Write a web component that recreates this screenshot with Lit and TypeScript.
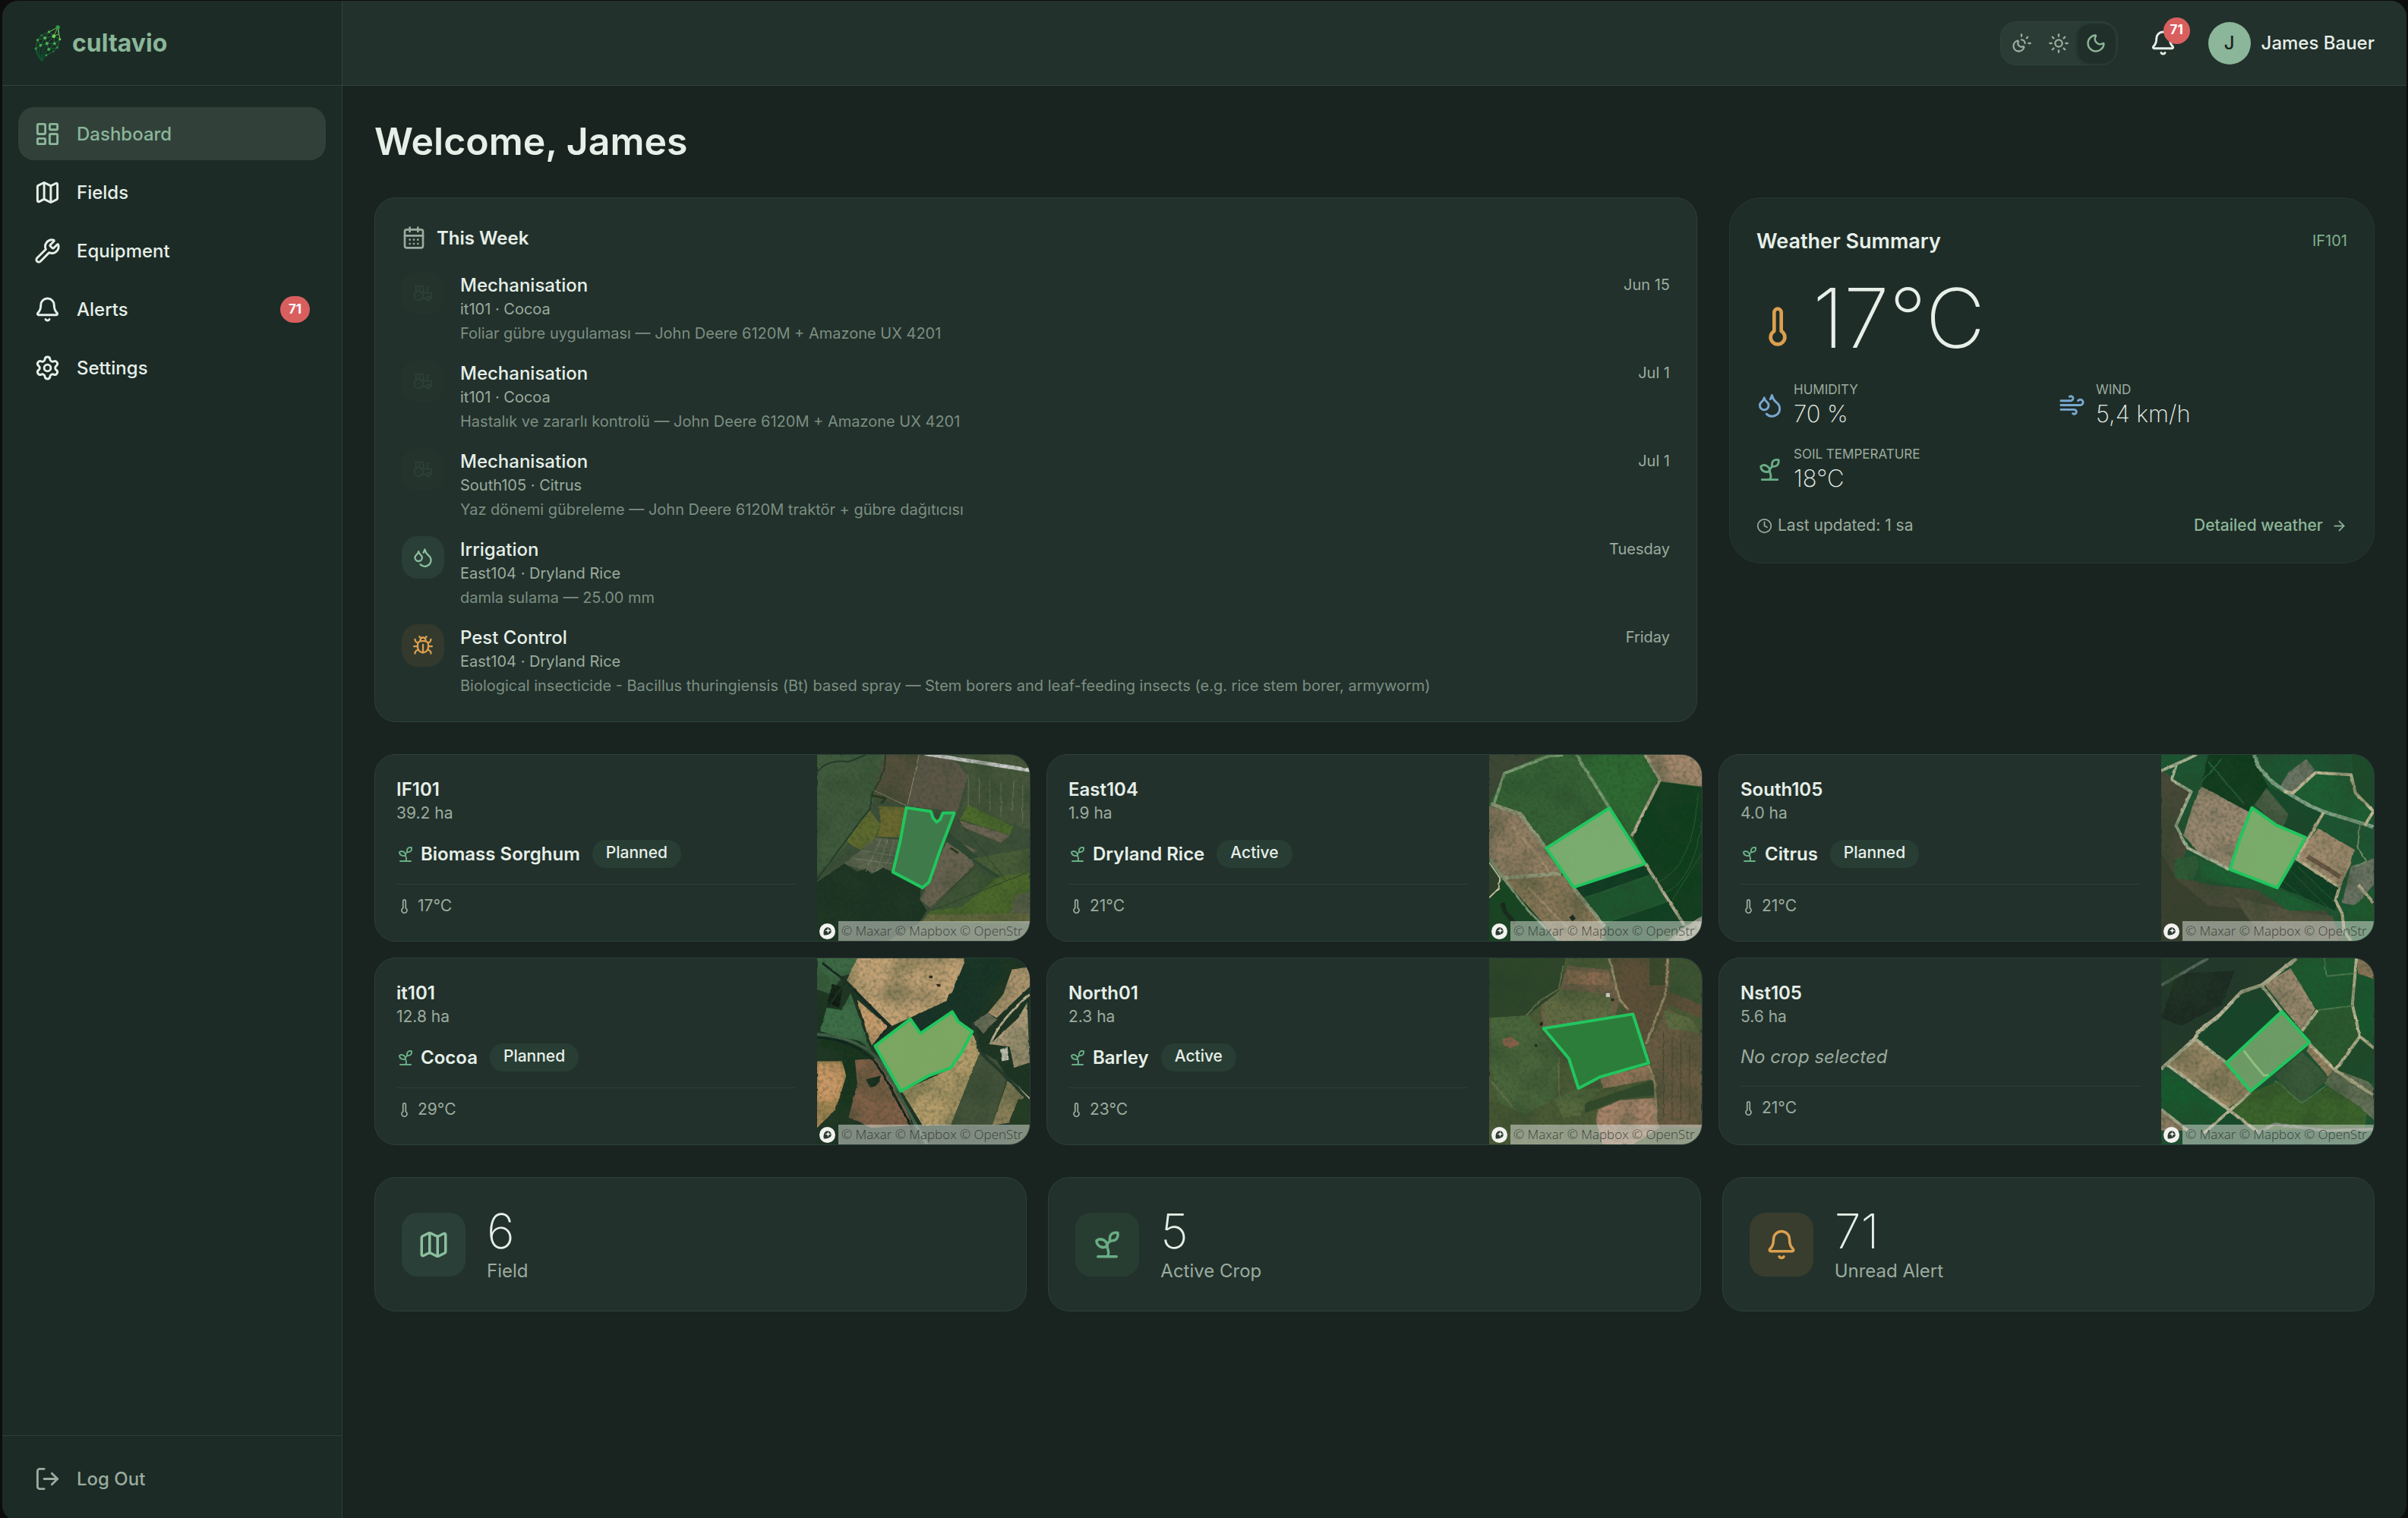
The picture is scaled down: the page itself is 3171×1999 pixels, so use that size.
import { LitElement, html, svg, css, nothing } from "lit";
import type { TemplateResult, SVGTemplateResult } from "lit";
import { customElement, property, state } from "lit/decorators.js";
import { classMap } from "lit/directives/class-map.js";

/* ---------- Icons (24-unit grid, stroked) ---------- */

const ICONS: Record<string, SVGTemplateResult> = {
  dashboard: svg`<rect x="3" y="3" width="7" height="9" rx="1"/><rect x="14" y="3" width="7" height="5" rx="1"/><rect x="14" y="12" width="7" height="9" rx="1"/><rect x="3" y="16" width="7" height="5" rx="1"/>`,
  map: svg`<path d="M14.106 5.553a2 2 0 0 0 1.788 0l3.659-1.83A1 1 0 0 1 21 4.619v12.764a1 1 0 0 1-.553.894l-4.553 2.277a2 2 0 0 1-1.788 0l-4.212-2.106a2 2 0 0 0-1.788 0l-3.659 1.83A1 1 0 0 1 3 19.381V6.618a1 1 0 0 1 .553-.894l4.553-2.277a2 2 0 0 1 1.788 0z"/><path d="M15 5.764v15"/><path d="M9 3.236v15"/>`,
  wrench: svg`<path d="M14.7 6.3a1 1 0 0 0 0 1.4l1.6 1.6a1 1 0 0 0 1.4 0l3.106-3.105c.32-.322.863-.22.983.218a6 6 0 0 1-8.259 7.057l-7.91 7.91a1 1 0 0 1-2.999-3l7.91-7.91a6 6 0 0 1 7.057-8.259c.438.12.54.662.219.984z"/>`,
  bell: svg`<path d="M10.268 21a2 2 0 0 0 3.464 0"/><path d="M3.262 15.326A1 1 0 0 0 4 17h16a1 1 0 0 0 .74-1.673C19.41 13.956 18 12.499 18 8A6 6 0 0 0 6 8c0 4.499-1.411 5.956-2.738 7.326"/>`,
  settings: svg`<path d="M9.671 4.136a2.34 2.34 0 0 1 4.659 0 2.34 2.34 0 0 0 3.319 1.915 2.34 2.34 0 0 1 2.33 4.033 2.34 2.34 0 0 0 0 3.831 2.34 2.34 0 0 1-2.33 4.033 2.34 2.34 0 0 0-3.319 1.915 2.34 2.34 0 0 1-4.659 0 2.34 2.34 0 0 0-3.32-1.915 2.34 2.34 0 0 1-2.33-4.033 2.34 2.34 0 0 0 0-3.831A2.34 2.34 0 0 1 6.35 6.051a2.34 2.34 0 0 0 3.319-1.915"/><circle cx="12" cy="12" r="3"/>`,
  logout: svg`<path d="m16 17 5-5-5-5"/><path d="M21 12H9"/><path d="M9 21H5a2 2 0 0 1-2-2V5a2 2 0 0 1 2-2h4"/>`,
  sunMoon: svg`<path d="M12 2v2"/><path d="M14.837 16.385a6 6 0 1 1-7.223-7.222c.624-.147.97.66.715 1.248a4 4 0 0 0 5.26 5.259c.589-.255 1.396.09 1.248.715"/><path d="M16 12a4 4 0 0 0-4-4"/><path d="m19 5-1.256 1.256"/><path d="M20 12h2"/>`,
  sun: svg`<circle cx="12" cy="12" r="4"/><path d="M12 2v2"/><path d="M12 20v2"/><path d="m4.93 4.93 1.41 1.41"/><path d="m17.66 17.66 1.41 1.41"/><path d="M2 12h2"/><path d="M20 12h2"/><path d="m6.34 17.66-1.41 1.41"/><path d="m19.07 4.93-1.41 1.41"/>`,
  moon: svg`<path d="M20.985 12.486a9 9 0 1 1-9.473-9.472c.405-.022.617.46.402.803a6 6 0 0 0 8.268 8.268c.344-.215.825-.004.803.401"/>`,
  calendar: svg`<path d="M8 2v4"/><path d="M16 2v4"/><rect x="3" y="4" width="18" height="18" rx="2"/><path d="M3 10h18"/><path d="M8 14h.01"/><path d="M12 14h.01"/><path d="M16 14h.01"/><path d="M8 18h.01"/><path d="M12 18h.01"/><path d="M16 18h.01"/>`,
  tractor: svg`<path d="m10 11 11 .9a1 1 0 0 1 .8 1.1l-.665 4.158a1 1 0 0 1-.988.842H20"/><path d="M16 18h-5"/><path d="M18 5a1 1 0 0 0-1 1v5.573"/><path d="M3 4h8.129a1 1 0 0 1 .99.863L13 11.246"/><path d="M4 11V4"/><path d="M7 15h.01"/><path d="M8 10.1V4"/><circle cx="18" cy="18" r="2"/><circle cx="7" cy="15" r="5"/>`,
  droplets: svg`<path d="M7 16.3c2.2 0 4-1.83 4-4.05 0-1.16-.57-2.26-1.71-3.19S7.29 6.75 7 5.3c-.29 1.45-1.14 2.84-2.29 3.76S3 11.1 3 12.25c0 2.22 1.8 4.05 4 4.05z"/><path d="M12.56 6.6A10.97 10.97 0 0 0 14 3.02c.5 2.5 2 4.9 4 6.5s3 3.5 3 5.5a6.98 6.98 0 0 1-11.91 4.97"/>`,
  bug: svg`<path d="m8 2 1.88 1.88"/><path d="M14.12 3.88 16 2"/><path d="M9 7.13v-1a3.003 3.003 0 1 1 6 0v1"/><path d="M12 20c-3.3 0-6-2.7-6-6v-3a4 4 0 0 1 4-4h4a4 4 0 0 1 4 4v3c0 3.3-2.7 6-6 6"/><path d="M12 20v-9"/><path d="M6.53 9C4.6 8.8 3 7.1 3 5"/><path d="M6 13H2"/><path d="M3 21c0-2.1 1.7-3.9 3.8-4"/><path d="M20.97 5c0 2.1-1.6 3.8-3.5 4"/><path d="M22 13h-4"/><path d="M17.2 17c2.1.1 3.8 1.9 3.8 4"/>`,
  thermometer: svg`<path d="M14 4v10.54a4 4 0 1 1-4 0V4a2 2 0 0 1 4 0Z"/>`,
  wind: svg`<path d="M12.8 19.6A2 2 0 1 0 14 16H2"/><path d="M17.5 8a2.5 2.5 0 1 1 2 4H2"/><path d="M9.8 4.4A2 2 0 1 1 11 8H2"/>`,
  sprout: svg`<path d="M14 9.536V7a4 4 0 0 1 4-4h1.5a.5.5 0 0 1 .5.5V5a4 4 0 0 1-4 4 4 4 0 0 0-4 4c0 2 1 3 1 5a5 5 0 0 1-1 3"/><path d="M4 9a5 5 0 0 1 8 4 5 5 0 0 1-8-4"/><path d="M5 21h14"/>`,
  clock: svg`<circle cx="12" cy="12" r="10"/><path d="M12 6v6l4 2"/>`,
  arrow: svg`<path d="M5 12h14"/><path d="m12 5 7 7-7 7"/>`,
};

const icon = (name: string, size: string, width = 2): TemplateResult =>
  html`<svg class="icon ${size}" viewBox="0 0 24 24" stroke-width=${width} aria-hidden="true">${ICONS[name]}</svg>`;

/* ---------- Brand mark: a leaf made of linked nodes ---------- */

const LEAF_NODES: [number, number, number, string][] = [
  [139, 44, 8, "#2f9a45"], [104, 62, 5, "#4db54c"], [123, 79, 7, "#6fd35a"], [147, 91, 5, "#5fc653"],
  [74, 76, 4, "#1e7a3c"], [59, 94, 5, "#3aa548"], [88, 86, 6, "#4fbb50"], [71, 115, 6, "#3fa94a"],
  [96, 108, 6, "#49b64d"], [126, 108, 6, "#3fa94a"], [52, 128, 5, "#2f9444"], [103, 131, 6, "#3fae4b"],
  [137, 124, 5, "#278a41"], [93, 154, 5, "#2a8c42"], [122, 139, 4, "#1d6f3a"],
];

const brandMark = html`<svg class="brand-mark" viewBox="46 32 110 150" aria-hidden="true">
  <g fill="none" stroke="#1d6b3b" stroke-width="3">
    <path d="M139 44 104 62 74 76 59 94 52 128Q54 156 76 178M139 44 147 91 137 124 122 139 93 154"/>
    <path d="M104 62 88 86 59 94M104 62 123 79 88 86 96 108 126 108 147 91 123 79 126 108 137 124 103 131"/>
    <path d="M74 76 88 86 71 115 96 108 123 79M96 108 103 131 126 108M59 94 71 115 52 128"/>
  </g>
  <g fill="none" stroke="#6fbf52" stroke-width="3"><path d="M139 44 123 79M139 44 147 91M139 44 104 62M139 44 143 70 123 79"/></g>
  <g fill="none" stroke="#11502f" stroke-width="4">
    <path d="M76 178Q58 150 71 115M76 178Q66 150 96 108M77 178Q74 150 103 131M78 178Q80 164 93 154M74 174Q54 150 59 130"/>
  </g>
  ${LEAF_NODES.map(([x, y, r, fill]) => svg`<circle cx=${x} cy=${y} r=${r} fill=${fill}/>`)}
</svg>`;

/* ---------- Aerial map drawings ---------- */

const area = (fill: string, points: string) => svg`<polygon fill=${fill} points=${points}/>`;
const track = (stroke: string, width: number, d: string) =>
  svg`<path class="track" stroke=${stroke} stroke-width=${width} d=${d}/>`;
const parcel = (fill: string, points: string) => svg`<polygon class="parcel" fill=${fill} points=${points}/>`;

interface Aerial {
  box: string;
  ground: SVGTemplateResult;
  outline: SVGTemplateResult;
}

const AERIALS: Record<string, Aerial> = {
  if101: {
    box: "1038 44 488 711",
    ground: svg`
      ${area("#3c4f38", "1038,44 1526,44 1526,755 1038,755")}
      ${area("#3f5a3d", "1038,44 1192,44 1180,190 1100,400 1038,500")}
      ${area("#54503b", "1192,44 1272,44 1245,240 1170,210 1168,180")}
      ${area("#5b5746", "1272,44 1350,60 1385,120 1360,262 1245,240")}
      ${area("#46563a", "1350,44 1526,44 1526,330 1370,250 1390,120")}
      ${area("#4d6a2c", "1385,235 1490,320 1480,350 1365,290")}
      ${area("#5e6a2f", "1158,255 1183,310 1172,360 1140,410 1105,375")}
      ${area("#6a682f", "1180,240 1243,245 1226,360 1176,356 1184,300")}
      ${area("#5b6350", "1172,360 1225,368 1212,490 1165,495 1100,460")}
      ${area("#6b6251", "1340,360 1400,405 1395,470 1300,630 1275,600 1290,540")}
      ${area("#6c6452", "1365,295 1480,350 1460,380 1370,318")}
      ${area("#2d4630", "1340,340 1470,520 1460,525 1330,370")}
      ${area("#3f5436", "1400,480 1450,520 1370,640 1300,640")}
      ${area("#495c38", "1395,440 1526,400 1526,490 1470,520")}
      ${area("#4e682c", "1450,515 1526,490 1526,600 1480,690 1280,680 1300,640 1370,625")}
      ${area("#5c5f4a", "1495,580 1526,570 1526,690 1475,680")}
      ${area("#1d3220", "1038,530 1100,460 1130,490 1150,480 1165,500 1190,475 1215,495 1275,550 1275,600 1290,640 1270,690 1200,755 1038,755")}
      ${area("#66673e", "1290,655 1526,650 1526,680 1280,680")}
      ${track("#233a2a", 2, "M1195 44Q1195 110 1165 190L1160 250 1140 290 1038 520M1038 110Q1060 60 1110 70L1150 44")}
      ${track("#8d9280", 1, "M1272 44 1245 240M1168 180 1245 240")}
      ${track("#7d8570", 1, "M1185 365 1150 490M1200 368 1175 490M1215 368 1195 480M1140 410 1215 430M1120 440 1212 460")}
      ${track("#2c4029", 1, "M1360 290 1470 520M1400 470 1290 640M1300 640 1526 490")}
      ${track("#c9cbc8", 5, "M1285 40 1526 103")}
      ${track("#727a63", 1, "M1385 120V240M1410 130V230M1435 140V260M1460 150V280M1490 140 1485 260M1510 160V300")}
      ${track("#26361f", 3, "M1165 200 1195 210 1185 230M1345 400 1360 420")}`,
    outline: parcel("#3f7d4b", "1243,246 1299,260 1304,285 1312,301 1320,292 1327,266 1353,266 1320,410 1295,530 1280,552 1212,492 1228,380"),
  },
  east104: {
    box: "1030 44 488 711",
    ground: svg`
      ${area("#2d5f31", "1030,44 1518,44 1518,755 1030,755")}
      ${area("#3c4634", "1030,44 1165,44 1110,95 1065,120 1030,230")}
      ${area("#366234", "1150,44 1232,44 1306,246 1160,400 1105,275 1040,235 1065,120")}
      ${area("#2f6a30", "1236,44 1388,44 1420,150 1355,355 1306,246")}
      ${area("#a3876c", "1392,44 1518,44 1518,165 1422,145")}
      ${area("#103d1e", "1424,148 1518,168 1518,670 1480,690 1388,460 1360,355")}
      ${area("#927d63", "1030,240 1100,275 1197,495 1065,515 1030,440")}
      ${area("#877556", "1065,520 1200,505 1295,700 1290,755 1180,755 1110,620")}
      ${area("#194524", "1030,560 1065,520 1190,755 1030,755")}
      ${area("#2f3f2c", "1030,450 1058,515 1050,560 1030,590")}
      ${area("#0f3a20", "1226,550 1386,464 1400,500 1240,595")}
      ${area("#1a562e", "1240,595 1400,500 1440,605 1290,690")}
      ${area("#113f21", "1290,690 1440,605 1475,700 1400,755 1300,755")}
      ${track("#7a9a70", 4, "M1040 235 1065 115 1165 50 1200 44M1230 44 1306 246")}
      ${track("#b3a98e", 4, "M1388 44 1422 140 1357 355M1388 460 1478 695")}
      ${track("#96997a", 5, "M1035 232 1100 270 1160 400M1060 515 1195 498M1222 550 1295 700")}
      ${track("#7f9575", 3, "M1030 440 1062 515 1120 640 1190 755")}
      ${track("#cfc39f", 2, "M1030 455 1055 515 1052 555 1030 590")}
      ${track("#255f33", 1, "M1510 190Q1500 460 1420 530M1518 300Q1500 520 1435 570M1518 420 1450 600M1250 590 1395 510M1290 690 1440 605")}
      ${track("#9d8a6a", 3, "M1085 320 1170 490M1120 550 1230 740")}
      ${track("#15281d", 6, "M1060 610 1070 650 1090 690M1218 660 1225 675")}
      ${area("#a8a694", "1518,660 1518,755 1440,755 1480,700")}`,
    outline: parcel("#80b073", "1306,247 1388,460 1224,550 1161,401"),
  },
  south105: {
    box: "1015 44 476 711",
    ground: svg`
      ${area("#1f5430", "1015,44 1491,44 1491,755 1015,755")}
      ${area("#4a4a38", "1015,100 1045,140 1080,185 1045,320 1075,400 1045,500 1120,540 1230,560 1300,640 1380,635 1430,755 1015,755")}
      ${area("#3a3f2f", "1015,420 1050,520 1120,620 1240,640 1200,755 1015,755")}
      ${area("#55523f", "1180,590 1310,640 1400,660 1410,755 1240,755")}
      ${area("#2f5c35", "1045,440 1095,430 1100,470 1085,525 1045,515")}
      ${area("#0d3a1f", "1120,44 1225,44 1235,110 1255,165 1210,260 1105,165")}
      ${area("#99876f", "1105,165 1215,265 1168,478 1100,420 1065,350 1085,240")}
      ${area("#12482a", "1225,235 1255,165 1380,265 1335,360 1275,310")}
      ${area("#4b5d45", "1225,235 1250,170 1300,270 1290,320 1265,300")}
      ${area("#6b7364", "1300,110 1340,60 1358,100 1340,150 1300,195 1280,170")}
      ${area("#1e6131", "1310,190 1360,115 1440,130 1450,190 1490,260 1480,310 1400,270")}
      ${area("#1a4c2b", "1440,44 1491,44 1491,250 1450,180")}
      ${area("#a08a6e", "1365,325 1447,405 1440,460 1415,550 1318,440")}
      ${track("#6a5744", 6, "M1343 432 1415 510")}
      ${area("#0f3d20", "1318,445 1412,550 1405,640 1280,550")}
      ${area("#1a6030", "1170,485 1275,555 1380,640 1300,640 1230,560 1105,520 1100,440")}
      ${area("#6a7263", "1440,470 1491,440 1491,540 1450,620 1420,610")}
      ${area("#1c5c2f", "1430,640 1491,560 1491,755 1425,755")}
      ${track("#a9b394", 4, "M1015 105 1095 44M1050 75 1038 140 1082 185 1048 315 1075 400 1168 482")}
      ${track("#7fa283", 5, "M1223 44Q1235 120 1290 180T1380 262L1491 320")}
      ${track("#c1b995", 4, "M1290 185 1310 190 1360 112 1440 120 1450 190 1490 260 1470 315")}
      ${track("#b9ae8b", 4, "M1378 265 1318 442 1414 550 1405 600 1420 650 1425 720 1440 755")}
      ${track("#bcb392", 4, "M1455 540 1491 610")}
      ${track("#6f8a62", 2, "M1460 310 1455 400 1475 450 1450 470")}
      ${track("#24603a", 2, "M1120 70 1200 230M1150 60 1100 160")}
      ${track("#1e5a2f", 1, "M1300 480 1390 630M1320 470 1405 610M1285 520 1360 630")}`,
    outline: parcel("#80b06d", "1218,246 1273,313 1338,360 1306,460 1275,552 1169,482 1190,370"),
  },
  it101: {
    box: "1038 822 488 711",
    ground: svg`
      ${area("#1a3324", "1038,822 1526,822 1526,1533 1038,1533")}
      ${area("#3d6a45", "1038,822 1130,822 1120,880 1095,890 1070,960 1038,940")}
      ${area("#3e6e47", "1115,955 1160,1170 1045,1100 1060,1010 1095,1020")}
      ${area("#c2a175", "1130,822 1375,822 1378,930 1340,960 1335,985 1210,1080 1105,910")}
      ${area("#c89c6c", "1130,980 1203,1085 1165,1160 1155,1120")}
      ${area("#08180f", "1072,920 1096,930 1090,1010 1062,995")}
      ${area("#173325", "1380,822 1450,822 1470,870 1430,980 1400,1060 1390,1090 1340,1030 1280,1100 1250,1060 1340,985")}
      ${area("#ad946e", "1485,865 1526,855 1526,930 1450,1050 1430,1030 1465,960")}
      ${area("#6a6c58", "1430,1030 1450,1055 1420,1110 1395,1070")}
      ${area("#b09c7b", "1520,990 1526,1220 1490,1240 1480,1160 1435,1150 1500,1050")}
      ${area("#b89058", "1038,1215 1095,1215 1105,1270 1090,1350 1080,1400 1038,1470")}
      ${area("#cb9866", "1042,1225 1090,1225 1098,1280 1080,1360 1042,1370")}
      ${area("#825f46", "1120,1205 1175,1205 1240,1380 1255,1460 1165,1470 1110,1430 1130,1300")}
      ${area("#14301f", "1060,1110 1140,1140 1175,1205 1125,1210 1130,1300 1110,1430 1085,1420 1105,1280 1095,1180 1038,1160")}
      ${area("#b39b6b", "1232,1330 1345,1245 1395,1105 1412,1180 1345,1460 1280,1460")}
      ${area("#45523a", "1412,1180 1450,1210 1475,1280 1440,1460 1345,1460")}
      ${area("#897e58", "1475,1290 1515,1340 1480,1450 1440,1460")}
      ${area("#203a22", "1500,1360 1526,1360 1526,1533 1470,1533 1480,1440")}
      ${area("#142c1c", "1150,1285 1185,1270 1175,1310 1160,1315")}
      ${area("#ddd8cb", "1458,1170 1475,1160 1478,1210 1462,1215")}
      ${track("#122820", 3, "M1050 840 1105 910 1203 1080 1165 1160M1105 910 1062 1010")}
      ${track("#43604a", 4, "M1038 1112Q1170 1130 1205 1280L1290 1533")}
      ${track("#0c211b", 3, "M1038 1124Q1155 1140 1195 1280L1275 1533")}
      ${track("#c0b493", 3, "M1526 960Q1460 1050 1435 1150M1475 1280 1526 1360")}
      ${track("#24382a", 4, "M1395 1070 1412 1180 1475 1280 1526 1370")}
      ${area("#2f2a1b", "1295,888 1303,888 1303,898 1295,898")}
      ${area("#2f2a1b", "1313,920 1321,920 1321,930 1313,930")}`,
    outline: parcel("#82ad66", "1252,1054 1275,1109 1348,1026 1362,1064 1394,1102 1370,1180 1345,1240 1295,1270 1230,1330 1171,1157"),
  },
  north01: {
    box: "1030 822 488 711",
    ground: svg`
      ${area("#4b5a36", "1030,822 1518,822 1518,1533 1030,1533")}
      ${area("#2f4429", "1030,822 1205,822 1195,940 1150,1000 1120,1040 1030,1050")}
      ${area("#74604a", "1210,850 1305,865 1330,980 1320,1040 1150,1085 1150,1000 1190,950")}
      ${area("#8a6a50", "1210,865 1305,880 1305,925 1210,920")}
      ${area("#626b43", "1195,940 1310,960 1315,1040 1160,1075 1155,1000")}
      ${area("#4a653a", "1035,1050 1120,1040 1150,1100 1190,1200 1180,1360 1110,1420 1050,1370 1035,1230")}
      ${area("#8a6249", "1060,1130 1080,1120 1100,1150 1080,1165 1062,1155")}
      ${area("#5f5038", "1310,822 1518,822 1518,1050 1440,1000 1390,1160 1335,1010")}
      ${area("#3c4a2c", "1398,822 1436,822 1432,925 1398,925")}
      ${area("#3c5230", "1444,822 1518,822 1518,1000 1445,950")}
      ${area("#6a5a42", "1390,1160 1440,1010 1518,1110 1518,1470 1415,1470 1405,1240")}
      ${area("#5d6a40", "1430,1020 1490,1050 1518,1110 1440,1090")}
      ${area("#97765a", "1285,1280 1398,1230 1405,1285 1290,1320")}
      ${area("#334a29", "1250,1375 1410,1285 1408,1345 1330,1360 1250,1415")}
      ${area("#a58268", "1280,1400 1330,1365 1408,1355 1420,1470 1360,1533 1290,1533 1275,1440")}
      ${area("#56693c", "1180,1360 1230,1320 1290,1320 1250,1380 1240,1420 1200,1430")}
      ${track("#9a8b68", 3, "M1305 822 1330 980 1350 1020M1440 822 1435 960 1390 1150M1398 1230 1410 1300 1415 1440")}
      ${track("#65704a", 2, "M1115 1040 1150 980 1190 940 1200 850M1190 1200V1350M1035 1290 1090 1400")}
      ${track("#50452f", 1, "M1430 1100V1430M1450 1120V1440M1470 1130V1440M1490 1150V1440")}
      ${track("#1c2b19", 4, "M1138 1150V1160M1150 1065V1080M1315 975V985")}
      ${area("#eeeae0", "1298,955 1307,955 1307,970 1298,970")}`,
    outline: parcel("#2b7f3a", "1155,1090 1360,1035 1396,1222 1285,1275 1235,1319 1213,1205"),
  },
  nst105: {
    box: "1015 822 476 711",
    ground: svg`
      ${area("#1c5330", "1015,822 1491,822 1491,1533 1015,1533")}
      ${area("#23382b", "1015,822 1310,822 1240,920 1190,950 1140,1050 1090,1130 1015,1240")}
      ${area("#1a2c22", "1050,880 1180,870 1150,1000 1060,1080 1015,1050")}
      ${area("#12452a", "1245,930 1285,1025 1160,1215 1098,1125 1145,1040 1200,945")}
      ${area("#9d8a70", "1305,860 1360,1015 1330,1100 1245,920")}
      ${area("#1b5a2f", "1320,822 1448,822 1445,1005 1365,1020 1305,860")}
      ${area("#2a5a2f", "1365,1022 1445,1005 1460,1120 1405,1250 1345,1140 1335,1100")}
      ${area("#8b7659", "1455,822 1491,822 1491,900 1455,880")}
      ${area("#19582e", "1455,885 1491,905 1491,1150 1460,1115 1448,1000")}
      ${area("#988664", "1090,1135 1160,1222 1215,1335 1165,1395 1030,1230")}
      ${area("#195a2f", "1015,1245 1160,1400 1110,1480 1040,1430 1015,1390")}
      ${area("#94805f", "1350,1150 1400,1250 1390,1275 1340,1175")}
      ${area("#3b5a3a", "1270,1270 1330,1180 1390,1280 1330,1375")}
      ${area("#3a632b", "1165,1395 1215,1335 1280,1290 1330,1375 1400,1300 1480,1380 1470,1470 1220,1480")}
      ${area("#67735a", "1420,1210 1450,1230 1491,1320 1491,1440 1460,1390 1380,1300")}
      ${area("#1d4c29", "1460,1140 1491,1170 1491,1300 1410,1250")}
      ${area("#98836a", "1015,1400 1075,1480 1015,1480")}
      ${area("#174c2a", "1110,1480 1165,1410 1230,1480 1200,1533 1100,1533")}
      ${track("#54665a", 4, "M1015 925 1120 822")}
      ${track("#b9b596", 5, "M1318 822 1240 925 1195 950 1145 1040 1100 1100 1090 1130 1015 1245")}
      ${track("#b9b596", 4, "M1090 1130 1160 1220M1240 925 1285 1025M1030 1230 1165 1400 1235 1490M1215 1335 1110 1490M1015 1400 1075 1480")}
      ${track("#bdb592", 4, "M1452 822 1443 1000 1460 1120 1405 1250M1460 1120 1491 1165M1345 1145 1405 1250 1491 1345M1330 1100 1365 1020")}
      ${track("#4e7a4c", 2, "M1365 1020 1445 1003M1270 1290 1330 1375 1400 1290M1380 822 1385 890 1445 880")}
      ${track("#7a8574", 4, "M1230 1490 1270 1455 1380 1480 1491 1475")}`,
    outline: svg`${parcel("#729f68", "1285,1025 1347,1143 1215,1330 1161,1222")}
      ${track("#8fbf80", 3, "M1200 1175 1225 1230 1245 1270 1255 1268")}`,
  },
};

/* ---------- Data ---------- */

interface WeekTask { kind: string; icon: string; title: string; place: string; note: string; date: string; }
interface Field { id: string; name: string; size: string; crop?: string; status?: string; temp: string; }

const TASKS: WeekTask[] = [
  { kind: "machine", icon: "tractor", title: "Mechanisation", place: "it101 · Cocoa", note: "Foliar gübre uygulaması — John Deere 6120M + Amazone UX 4201", date: "Jun 15" },
  { kind: "machine", icon: "tractor", title: "Mechanisation", place: "it101 · Cocoa", note: "Hastalık ve zararlı kontrolü — John Deere 6120M + Amazone UX 4201", date: "Jul 1" },
  { kind: "machine", icon: "tractor", title: "Mechanisation", place: "South105 · Citrus", note: "Yaz dönemi gübreleme — John Deere 6120M traktör + gübre dağıtıcısı", date: "Jul 1" },
  { kind: "water", icon: "droplets", title: "Irrigation", place: "East104 · Dryland Rice", note: "damla sulama — 25.00 mm", date: "Tuesday" },
  { kind: "pest", icon: "bug", title: "Pest Control", place: "East104 · Dryland Rice", note: "Biological insecticide - Bacillus thuringiensis (Bt) based spray — Stem borers and leaf-feeding insects (e.g. rice stem borer, armyworm)", date: "Friday" },
];

const FIELDS: Field[] = [
  { id: "if101", name: "IF101", size: "39.2 ha", crop: "Biomass Sorghum", status: "Planned", temp: "17°C" },
  { id: "east104", name: "East104", size: "1.9 ha", crop: "Dryland Rice", status: "Active", temp: "21°C" },
  { id: "south105", name: "South105", size: "4.0 ha", crop: "Citrus", status: "Planned", temp: "21°C" },
  { id: "it101", name: "it101", size: "12.8 ha", crop: "Cocoa", status: "Planned", temp: "29°C" },
  { id: "north01", name: "North01", size: "2.3 ha", crop: "Barley", status: "Active", temp: "23°C" },
  { id: "nst105", name: "Nst105", size: "5.6 ha", temp: "21°C" },
];

const STATS = [
  { kind: "fields", icon: "map", value: "6", label: "Field" },
  { kind: "crops", icon: "sprout", value: "5", label: "Active Crop" },
  { kind: "unread", icon: "bell", value: "71", label: "Unread Alert" },
];

const NAV = [
  { icon: "dashboard", label: "Dashboard" },
  { icon: "map", label: "Fields" },
  { icon: "wrench", label: "Equipment" },
  { icon: "bell", label: "Alerts", count: 71 },
  { icon: "settings", label: "Settings" },
];

const THEMES = [
  { icon: "sunMoon", label: "Automatic theme" },
  { icon: "sun", label: "Light theme" },
  { icon: "moon", label: "Dark theme" },
];

/* ---------- Shared styles ---------- */

const shared = css`
  * { box-sizing: border-box; }
  h1, h2, h3, p, ul, dl, dd, dt { margin: 0; padding: 0; font: inherit; }
  ul { list-style: none; }
  a { color: inherit; text-decoration: none; }
  button { font: inherit; color: inherit; background: none; border: 0; padding: 0; cursor: pointer; }
  .icon { display: block; flex: none; fill: none; stroke: currentColor; stroke-linecap: round; stroke-linejoin: round; }
  .s21 { width: 21px; height: 21px; }
  .s24 { width: 24px; height: 24px; }
  .s28 { width: 28px; height: 28px; }
  .s32 { width: 32px; height: 32px; }
  .s35 { width: 35px; height: 35px; }
  .s42 { width: 42px; height: 42px; }
  .s56 { width: 56px; height: 56px; }
  .card { background: var(--card); border: 1px solid var(--line); border-radius: 28px; }
`;

/* ---------- Sidebar ---------- */

@customElement("side-nav")
class SideNav extends LitElement {
  @state() private active = "Dashboard";

  static styles = [shared, css`
    :host { display: flex; flex-direction: column; background: var(--side); border-right: 1px solid var(--rule); }
    .brand { display: flex; align-items: center; gap: 13px; height: 112px; padding: 0 42px; border-bottom: 1px solid var(--rule); color: var(--accent); font-size: 32px; font-weight: 700; }
    .brand-mark { width: 37px; height: 50px; }
    .links { display: flex; flex-direction: column; gap: 7px; flex: 1; padding: 28px 21px; }
    .link { display: flex; align-items: center; gap: 21px; width: 100%; height: 70px; padding: 0 21px; border-radius: 21px; color: var(--text); font-size: 24px; font-weight: 500; text-align: left; }
    .link.active { background: #31413a; color: var(--accent); }
    .link.quiet { color: var(--muted); }
    .label { flex: 1; }
    .count { min-width: 39px; height: 35px; padding: 0 9px; border-radius: 18px; background: var(--red); color: #fff; font-size: 17px; font-weight: 700; line-height: 35px; text-align: center; }
    .foot { border-top: 1px solid var(--rule); padding: 21px; }
  `];

  render() {
    return html`
      <a class="brand" href="#home">${brandMark}<span>cultavio</span></a>
      <nav class="links" aria-label="Main">
        ${NAV.map((n) => html`
          <a class=${classMap({ link: true, active: n.label === this.active })} href="#${n.label.toLowerCase()}" @click=${() => (this.active = n.label)}>
            ${icon(n.icon, "s35")}<span class="label">${n.label}</span>
            ${n.count ? html`<span class="count">${n.count}</span>` : nothing}
          </a>`)}
      </nav>
      <div class="foot"><button class="link quiet" type="button">${icon("logout", "s35")}<span class="label">Log Out</span></button></div>`;
  }
}

/* ---------- Top bar ---------- */

@customElement("top-bar")
class TopBar extends LitElement {
  @state() private theme = 2;

  static styles = [shared, css`
    :host { display: flex; align-items: center; justify-content: flex-end; gap: 28px; height: 112px; padding: 0 42px; background: var(--card); border-bottom: 1px solid var(--rule); }
    .themes { display: flex; padding: 3px; border: 1px solid #2f4339; border-radius: 21px; background: #2a3c35; color: var(--muted); }
    .theme { display: grid; place-items: center; width: 49px; height: 50px; border-radius: 16px; }
    .theme.on { background: #212f2a; color: var(--accent); box-shadow: 0 1px 4px #1c2924; }
    .bell { position: relative; display: grid; place-items: center; width: 63px; height: 63px; color: var(--text); }
    .dot { position: absolute; top: -2px; right: -4px; min-width: 35px; height: 35px; border-radius: 18px; background: var(--red); color: #fff; font-size: 17px; font-weight: 700; line-height: 33px; text-align: center; }
    .user { display: flex; align-items: center; gap: 14px; color: var(--text); font-size: 24px; font-weight: 500; }
    .avatar { display: grid; place-items: center; width: 56px; height: 56px; border-radius: 50%; background: var(--accent); color: #1a2421; }
  `];

  render() {
    return html`
      <div class="themes" role="group" aria-label="Theme">
        ${THEMES.map((t, i) => html`
          <button type="button" class=${classMap({ theme: true, on: i === this.theme })} aria-label=${t.label} aria-pressed=${i === this.theme} @click=${() => (this.theme = i)}>${icon(t.icon, "s28")}</button>`)}
      </div>
      <button class="bell" type="button" aria-label="Notifications">${icon("bell", "s35")}<span class="dot">71</span></button>
      <button class="user" type="button"><span class="avatar">J</span><span>James Bauer</span></button>`;
  }
}

/* ---------- This week ---------- */

@customElement("week-card")
class WeekCard extends LitElement {
  static styles = [shared, css`
    :host { display: block; }
    .card { padding: 35px 35px 33px; }
    .head { display: flex; align-items: center; gap: 14px; height: 34px; margin-bottom: 28px; color: var(--muted); }
    .head h2 { color: var(--text); font-size: 24px; font-weight: 600; }
    .tasks { display: flex; flex-direction: column; gap: 21px; }
    .task { display: flex; gap: 21px; }
    .badge { display: grid; place-items: center; flex: none; width: 56px; height: 56px; border-radius: 21px; }
    .machine { background: #24332c; color: #2b3f37; }
    .water { background: #2a3f37; color: #8bbf9e; }
    .pest { background: #333a2d; color: var(--amber); }
    .body { flex: 1; }
    .title { color: var(--text); font-size: 24px; font-weight: 500; line-height: 35px; }
    .place { color: var(--muted); font-size: 20px; line-height: 28px; }
    .note { margin-top: 4px; color: var(--dim); font-size: 20px; line-height: 28px; }
    .date { color: var(--muted); font-size: 20px; line-height: 35px; }
  `];

  render() {
    return html`<section class="card">
      <div class="head">${icon("calendar", "s32")}<h2>This Week</h2></div>
      <ul class="tasks">
        ${TASKS.map((t) => html`<li class="task">
          <span class="badge ${t.kind}">${icon(t.icon, "s28")}</span>
          <div class="body"><h3 class="title">${t.title}</h3><p class="place">${t.place}</p><p class="note">${t.note}</p></div>
          <time class="date">${t.date}</time>
        </li>`)}
      </ul>
    </section>`;
  }
}

/* ---------- Weather ---------- */

@customElement("weather-card")
class WeatherCard extends LitElement {
  static styles = [shared, css`
    :host { display: block; }
    .card { padding: 35px; border-radius: 42px; background: #1f2d28; border-color: #25382f; }
    .head { display: flex; align-items: center; justify-content: space-between; height: 42px; }
    .head h2 { color: var(--text); font-size: 27px; font-weight: 600; }
    .station { color: #7fb08f; font-size: 20px; }
    .now { display: flex; align-items: baseline; gap: 18px; margin: 28px 0 30px; color: var(--amber); }
    .value { color: var(--text); font-size: 108px; font-weight: 200; line-height: 105px; }
    .facts { display: grid; grid-template-columns: 1fr 1fr; gap: 21px 18px; }
    .fact { display: flex; align-items: center; gap: 14px; color: #78a8d0; }
    .fact.soil { color: #69ad84; }
    .fact dt { color: var(--muted); font-size: 17px; line-height: 24px; text-transform: uppercase; }
    .fact dd { color: var(--text); font-size: 31px; font-weight: 200; line-height: 40px; }
    .foot { display: flex; align-items: center; justify-content: space-between; margin-top: 28px; font-size: 21px; line-height: 28px; }
    .updated { display: flex; align-items: center; gap: 7px; color: var(--muted); }
    .more { display: flex; align-items: center; gap: 11px; color: var(--accent); font-weight: 500; }
  `];

  private fact(kind: string, name: string, label: string, value: string) {
    return html`<div class="fact ${kind}">${icon(name, "s35")}<div><dt>${label}</dt><dd>${value}</dd></div></div>`;
  }

  render() {
    return html`<section class="card">
      <div class="head"><h2>Weather Summary</h2><span class="station">IF101</span></div>
      <div class="now">${icon("thermometer", "s56")}<span class="value">17°C</span></div>
      <dl class="facts">
        ${this.fact("air", "droplets", "Humidity", "70 %")}
        ${this.fact("air", "wind", "Wind", "5,4 km/h")}
        ${this.fact("soil", "sprout", "Soil temperature", "18°C")}
      </dl>
      <div class="foot">
        <span class="updated">${icon("clock", "s21")}Last updated: 1 sa</span>
        <a class="more" href="#weather">Detailed weather ${icon("arrow", "s21")}</a>
      </div>
    </section>`;
  }
}

/* ---------- Field ---------- */

@customElement("field-card")
class FieldCard extends LitElement {
  @property({ attribute: false }) field!: Field;

  static styles = [shared, css`
    :host { display: block; }
    .card { display: flex; overflow: hidden; }
    .info { flex: 1; padding: 28px 28px 0; }
    .name { color: var(--text); font-size: 24px; font-weight: 600; line-height: 35px; }
    .size { color: var(--muted); font-size: 21px; line-height: 28px; }
    .crop { display: flex; align-items: center; gap: 8px; margin: 21px 0; color: #69ad84; }
    .crop-name { color: var(--text); font-size: 24px; font-weight: 600; line-height: 35px; }
    .status { margin-left: 8px; padding: 0 18px; height: 37px; border-radius: 18px; background: #283d34; color: var(--text); font-size: 21px; font-weight: 500; line-height: 34px; }
    .none { margin: 21px 0; color: var(--muted); font-size: 24px; font-style: italic; line-height: 35px; }
    .temp { display: flex; align-items: center; gap: 7px; padding-top: 14px; border-top: 1px solid #2c3f38; color: var(--muted); font-size: 21px; line-height: 28px; }
    .map { position: relative; flex: none; width: 280px; height: 245px; }
    .aerial { display: block; width: 100%; height: 100%; }
    .track { fill: none; vector-effect: non-scaling-stroke; stroke-linejoin: round; }
    .parcel { fill-opacity: 0.94; stroke: #22c55e; stroke-width: 4px; stroke-linejoin: round; vector-effect: non-scaling-stroke; }
    .credit { position: absolute; left: 0; right: 0; bottom: 0; display: flex; align-items: center; gap: 4px; height: 26px; padding-left: 3px; }
    .credit-mark { flex: none; width: 21px; height: 21px; }
    .credit-text { flex: 1; padding-left: 4px; background: rgba(225, 228, 222, 0.5); color: rgba(30, 36, 32, 0.78); font: 300 17px/26px "Open Sans", "Noto Sans", sans-serif; white-space: nowrap; }
  `];

  render() {
    const f = this.field;
    const a = AERIALS[f.id];
    const [x, y, w, h] = a.box.split(" ");
    return html`<article class="card">
      <div class="info">
        <h3 class="name">${f.name}</h3>
        <p class="size">${f.size}</p>
        ${f.crop
          ? html`<div class="crop">${icon("sprout", "s24")}<span class="crop-name">${f.crop}</span><span class="status">${f.status}</span></div>`
          : html`<p class="none">No crop selected</p>`}
        <div class="temp">${icon("thermometer", "s21")}<span>${f.temp}</span></div>
      </div>
      <div class="map">
        <svg class="aerial" viewBox=${a.box} preserveAspectRatio="none" role="img" aria-label="Map of ${f.name}">
          <defs>
            <filter id="relief" x="0" y="0" width="100%" height="100%">
              <feTurbulence type="fractalNoise" baseFrequency="0.12 0.07" numOctaves="4" seed="7"/>
              <feColorMatrix values="0 0 0 0 0.02  0 0 0 0 0.05  0 0 0 0 0.02  0.8 0 0 0 -0.32"/>
            </filter>
            <filter id="tone" x="0" y="0" width="100%" height="100%">
              <feTurbulence type="fractalNoise" baseFrequency="0.015 0.008" numOctaves="2" seed="11"/>
              <feColorMatrix values="0 0 0 0 0.02  0 0 0 0 0.05  0 0 0 0 0.02  0.9 0 0 0 -0.38"/>
            </filter>
            <filter id="soft" x="0" y="0" width="100%" height="100%">
              <feTurbulence type="fractalNoise" baseFrequency="0.04" numOctaves="2" seed="3" result="n"/>
              <feDisplacementMap in="SourceGraphic" in2="n" scale="5" xChannelSelector="R" yChannelSelector="G" result="d"/>
              <feGaussianBlur in="d" stdDeviation="1"/>
            </filter>
          </defs>
          <g filter="url(#soft)">${a.ground}</g>
          <rect x=${x} y=${y} width=${w} height=${h} filter="url(#tone)"/>
          <rect x=${x} y=${y} width=${w} height=${h} filter="url(#relief)"/>
          ${a.outline}
        </svg>
        <div class="credit">
          <svg class="credit-mark" viewBox="0 0 22 22" aria-hidden="true">
            <circle cx="11" cy="11" r="11" fill="#f2f3f0"/>
            <path d="M6 16q-1-6 2-9 3-3 7 0 3 4 0 7-3 3-9 2z" fill="#2b3a30"/>
            <path d="m12 6 1 3 3 1-3 1-1 3-1-3-3-1 3-1z" fill="#f2f3f0"/>
          </svg>
          <span class="credit-text">© Maxar © Mapbox © OpenStr</span>
        </div>
      </div>
    </article>`;
  }
}

/* ---------- Page ---------- */

@customElement("app-root")
class AppRoot extends LitElement {
  static styles = [shared, css`
    :host {
      --side: #1c2b26; --card: #22312c; --line: #2b4038; --rule: #2f413a;
      --text: #e6efe8; --muted: #9bab9e; --dim: #7c8e81; --accent: #8bb699; --red: #d95f5f; --amber: #dc9f4f;
      display: block; height: 100vh; overflow: hidden; padding: 1px 2px 0 3px; background: #0d0d0d;
      font-family: Inter, "Liberation Sans", sans-serif; font-size: 24px; color: var(--text);
    }
    .window { display: grid; grid-template-columns: 448px minmax(0, 1fr); height: calc(100vh + 3px); border-radius: 21px; overflow: hidden; background: #192320; }
    .page { display: flex; flex-direction: column; gap: 42px; padding: 42px; }
    .welcome { color: var(--text); font-size: 50px; font-weight: 600; line-height: 63px; }
    .overview { display: grid; grid-template-columns: repeat(3, minmax(0, 1fr)); gap: 42px; align-items: start; }
    .week { grid-column: span 2; }
    .fields { display: grid; grid-template-columns: repeat(3, minmax(0, 1fr)); gap: 21px; }
    .stats { display: grid; grid-template-columns: repeat(3, minmax(0, 1fr)); gap: 28px; }
    .stat { display: flex; align-items: center; gap: 28px; padding: 35px; }
    .tile { display: grid; place-items: center; width: 84px; height: 84px; border-radius: 21px; }
    .tile.fields-tile { background: #2a3f37; color: #8bbf9e; }
    .tile.crops-tile { background: #283d31; color: #69ad84; }
    .tile.unread-tile { background: #383d2d; color: var(--amber); }
    .number { color: var(--text); font-size: 63px; font-weight: 200; line-height: 70px; }
    .caption { color: var(--muted); font-size: 24px; line-height: 35px; }
  `];

  render() {
    return html`<div class="window">
      <side-nav></side-nav>
      <main>
        <top-bar></top-bar>
        <div class="page">
          <h1 class="welcome">Welcome, James</h1>
          <div class="overview"><week-card class="week"></week-card><weather-card></weather-card></div>
          <div class="fields">${FIELDS.map((f) => html`<field-card .field=${f}></field-card>`)}</div>
          <div class="stats">
            ${STATS.map((s) => html`<section class="card stat">
              <span class="tile ${s.kind}-tile">${icon(s.icon, "s42")}</span>
              <div><p class="number">${s.value}</p><p class="caption">${s.label}</p></div>
            </section>`)}
          </div>
        </div>
      </main>
    </div>`;
  }
}
